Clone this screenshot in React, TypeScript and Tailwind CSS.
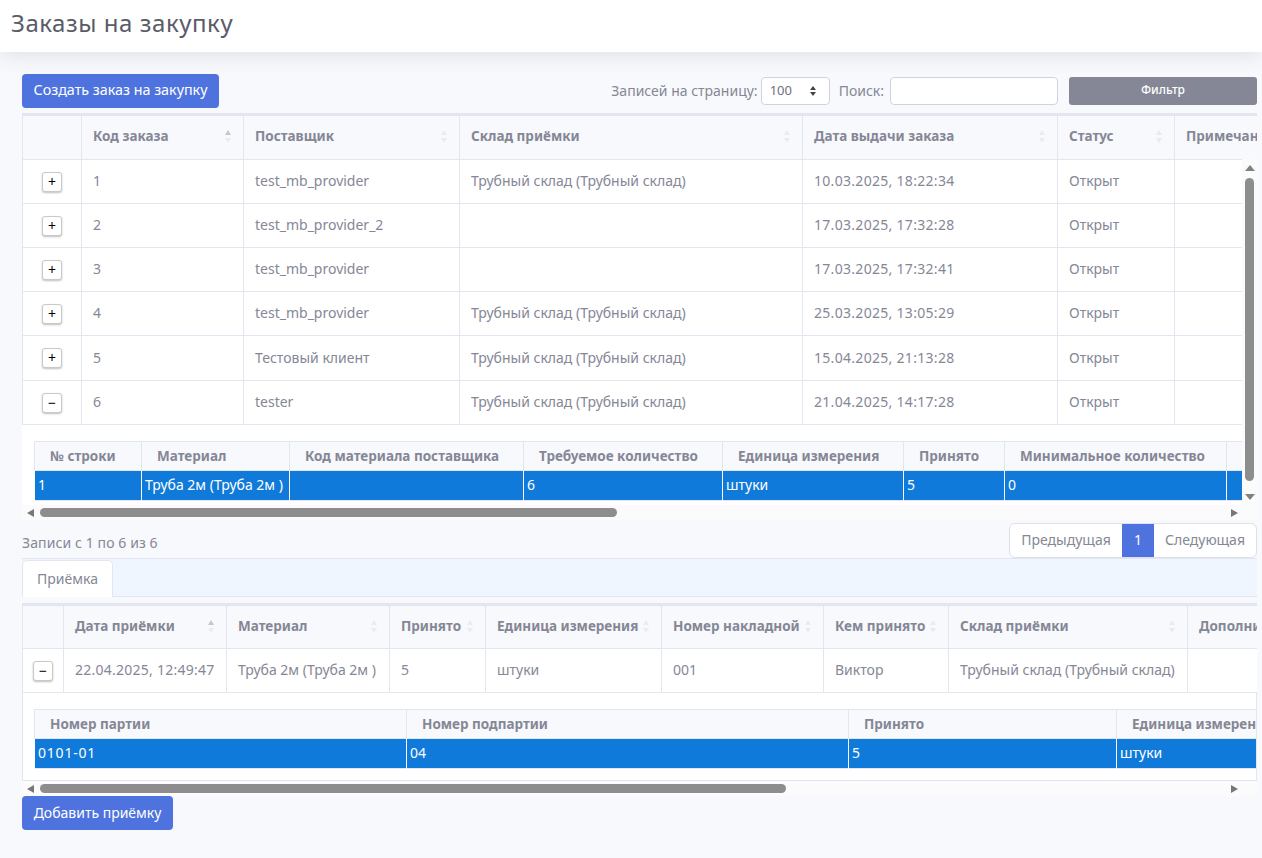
const font = "font-['Noto_Sans',sans-serif]";

function SortArrows({ active }: { active?: boolean }) {
  return (
    <span className="flex flex-col gap-[3px] shrink-0 w-[8px] items-center">
      <span className={`w-0 h-0 border-x-[3px] border-x-transparent border-b-[5px] ${active ? "border-b-[#c4c6d0]" : "border-b-[#e9ebf2]"}`} />
      <span className="w-0 h-0 border-x-[3px] border-x-transparent border-t-[5px] border-t-[#e9ebf2]" />
    </span>
  );
}

function Th({ label, sort, active }: { label?: string; sort?: boolean; active?: boolean }) {
  return (
    <th className="border border-[#e3e6f0] px-[11px] pb-[2px] text-[13.5px] font-bold text-left bg-[#f8f9fc] overflow-hidden whitespace-nowrap">
      <div className="flex items-center justify-between">
        <span>{label}</span>
        {sort && <SortArrows active={active} />}
      </div>
    </th>
  );
}

function Toggle({ open }: { open?: boolean }) {
  return (
    <button className="w-[20px] h-[20px] mx-auto flex items-center justify-center bg-white border border-[#c9c9c9] rounded-[3px] shadow-[0_1px_2px_rgba(0,0,0,0.25)] text-black text-[14px] leading-none">
      {open ? "−" : "+"}
    </button>
  );
}

function HScroll({ thumb }: { thumb: string }) {
  return (
    <div className="h-[15px] bg-[#fbfbfb] flex items-center pl-[5px] gap-[6px]">
      <span className="w-0 h-0 border-y-[4px] border-y-transparent border-r-[7px] border-r-[#777]" />
      <div className="flex-1">
        <div className={`h-[9px] rounded-full bg-[#8d8d8d] ${thumb}`} />
      </div>
      <span className="w-0 h-0 border-y-[4px] border-y-transparent border-l-[7px] border-l-[#777] mr-[19px]" />
    </div>
  );
}

function SubTable({ cols, heads, cells, width }: { cols: string[]; heads: string[]; cells: string[]; width: string }) {
  return (
    <table className={`table-fixed border border-[#e3e6f0] ${width}`}>
      <colgroup>
        {cols.map((c, i) => (
          <col key={i} className={c} />
        ))}
      </colgroup>
      <thead>
        <tr className="h-[29px]">
          {heads.map((h, i) => (
            <th key={i} className="border border-[#e3e6f0] pl-[15px] text-left text-[13.5px] font-bold bg-[#f8f9fc] whitespace-nowrap overflow-hidden">
              {h}
            </th>
          ))}
        </tr>
      </thead>
      <tbody>
        <tr className="h-[30px] bg-[#0f7ad9] text-white">
          {cells.map((c, i) => (
            <td key={i} className="border-x border-white px-[3px] pb-[2px] whitespace-nowrap overflow-hidden">
              {c === "0101-01" ? <span className="tracking-[0.8px]">{c}</span> : c}
            </td>
          ))}
        </tr>
      </tbody>
    </table>
  );
}

const orders = [
  ["1", "test_mb_provider", "Трубный склад (Трубный склад)", "10.03.2025, 18:22:34"],
  ["2", "test_mb_provider_2", "", "17.03.2025, 17:32:28"],
  ["3", "test_mb_provider", "", "17.03.2025, 17:32:41"],
  ["4", "test_mb_provider", "Трубный склад (Трубный склад)", "25.03.2025, 13:05:29"],
  ["5", "Тестовый клиент", "Трубный склад (Трубный склад)", "15.04.2025, 21:13:28"],
  ["6", "tester", "Трубный склад (Трубный склад)", "21.04.2025, 14:17:28"],
];

export default function App() {
  return (
    <div className={`min-h-screen bg-[#f8f9fc] text-[#858796] text-[14px] ${font}`}>
      <header className="h-[52px] bg-white shadow-[0_4px_20px_rgba(58,59,69,0.12)] flex items-center pl-[11px] pb-[6px]">
        <h1 className="text-[24px] text-[#5a5c69] font-normal tracking-[0.55px]">Заказы на закупку</h1>
      </header>

      <main className="pl-[22px] pr-[5px] pt-[22px]">
        <div className="flex items-center h-[34px]">
          <button className="h-[34px] w-[197px] pb-[2px] bg-[#4e73df] text-white rounded-[4px] text-[14.3px]">Создать заказ на закупку</button>
          <span className="ml-auto pb-[2px]">Записей на страницу:</span>
          <div className="ml-[3px] w-[69px] h-[28px] bg-white border border-[#d1d3e2] rounded-[4px] flex items-center justify-between pl-[8px] pr-[13px] text-[#6e707e] text-[13px]">
            100
            <span className="flex flex-col gap-[2px]">
              <span className="w-0 h-0 border-x-[3px] border-x-transparent border-b-[4px] border-b-[#444]" />
              <span className="w-0 h-0 border-x-[3px] border-x-transparent border-t-[4px] border-t-[#444]" />
            </span>
          </div>
          <span className="ml-[9px] pb-[2px]">Поиск:</span>
          <input className="ml-[6px] w-[168px] h-[28px] bg-white border border-[#d1d3e2] rounded-[4px]" />
          <button className="ml-[11px] w-[188px] h-[28px] pb-[2px] bg-[#858796] text-white rounded-[3px] text-[12px] font-medium">Фильтр</button>
        </div>

        <div className="relative mt-[5px] border-t-2 border-[#e3e6f0] overflow-hidden">
          <table className="table-fixed w-[1400px] bg-white border-collapse">
            <colgroup>
              <col className="w-[59px]" />
              <col className="w-[162px]" />
              <col className="w-[216px]" />
              <col className="w-[343px]" />
              <col className="w-[255px]" />
              <col className="w-[117px]" />
              <col className="w-[248px]" />
            </colgroup>
            <thead>
              <tr className="h-[44px]">
                <Th />
                <Th label="Код заказа" sort active />
                <Th label="Поставщик" sort />
                <Th label="Склад приёмки" sort />
                <Th label="Дата выдачи заказа" sort />
                <Th label="Статус" sort />
                <Th label="Примечание" />
              </tr>
            </thead>
            <tbody>
              {orders.map((o) => (
                <tr key={o[0]} className={o[0] === "5" ? "h-[45px]" : "h-[44px]"}>
                  <td className="border border-[#e3e6f0]">
                    <Toggle open={o[0] === "6"} />
                  </td>
                  {o.map((c, i) => (
                    <td key={i} className={`border border-[#e3e6f0] px-[11px] pb-[2px] whitespace-nowrap ${i === 3 ? "tracking-[0.3px]" : ""}`}>
                      {c}
                    </td>
                  ))}
                  <td className="border border-[#e3e6f0] px-[11px] pb-[2px]">Открыт</td>
                  <td className="border border-[#e3e6f0]" />
                </tr>
              ))}
            </tbody>
          </table>
          <div className="bg-white pt-[16px] pl-[12px] pr-[15px] pb-[4px] overflow-hidden">
            <SubTable
              width="w-[1300px]"
              cols={["w-[107px]", "w-[148px]", "w-[234px]", "w-[199px]", "w-[181px]", "w-[101px]", "w-[222px]", "w-[108px]"]}
              heads={["№ строки", "Материал", "Код материала поставщика", "Требуемое количество", "Единица измерения", "Принято", "Минимальное количество", ""]}
              cells={["1", "Труба 2м (Труба 2м )", "", "6", "штуки", "5", "0", ""]}
            />
          </div>
          <HScroll thumb="w-[577px]" />
          <div className="absolute right-0 top-[44px] bottom-[15px] w-[15px] bg-[#fbfbfb] flex flex-col items-center pt-[6px] pb-[5px]">
            <span className="w-0 h-0 border-x-[5px] border-x-transparent border-b-[6px] border-b-[#808080]" />
            <div className="w-[9px] h-[303px] mt-[7px] rounded-full bg-[#8d8d8d]" />
            <span className="w-0 h-0 mt-auto border-x-[5px] border-x-transparent border-t-[6px] border-t-[#808080]" />
          </div>
        </div>

        <div className="flex items-center justify-between h-[38px] pt-[2px]">
          <span className="pt-[4px] tracking-[0.1px]">Записи с 1 по 6 из 6</span>
          <div className="flex h-[35px] bg-white border border-[#dddfeb] rounded-[6px] overflow-hidden items-stretch">
            <span className="w-[112px] pb-[2px] flex items-center justify-center">Предыдущая</span>
            <span className="w-[32px] pb-[2px] flex items-center justify-center bg-[#4e73df] text-white">1</span>
            <span className="w-[102px] pb-[2px] flex items-center justify-center">Следующая</span>
          </div>
        </div>

        <div className="h-[39px] bg-[#f0f6ff] border-y border-[#e3e6f0] flex items-end">
          <div className="h-[37px] w-[91px] pb-[2px] bg-white border-x border-t border-[#e3e6f0] rounded-t-[5px] -mb-px flex items-center justify-center">
            Приёмка
          </div>
        </div>

        <div className="relative mt-[6px] border-t-2 border-[#e3e6f0] overflow-hidden">
          <table className="table-fixed w-[1400px] bg-white border-collapse">
            <colgroup>
              <col className="w-[41px]" />
              <col className="w-[163px]" />
              <col className="w-[163px]" />
              <col className="w-[96px]" />
              <col className="w-[176px]" />
              <col className="w-[162px]" />
              <col className="w-[125px]" />
              <col className="w-[239px]" />
              <col className="w-[235px]" />
            </colgroup>
            <thead>
              <tr className="h-[43px]">
                <Th />
                <Th label="Дата приёмки" sort active />
                <Th label="Материал" sort />
                <Th label="Принято" sort />
                <Th label="Единица измерения" sort />
                <Th label="Номер накладной" sort />
                <Th label="Кем принято" sort />
                <Th label="Склад приёмки" sort />
                <Th label="Дополнительно" />
              </tr>
            </thead>
            <tbody>
              <tr className="h-[44px]">
                <td className="border border-[#e3e6f0]">
                  <Toggle open />
                </td>
                {["22.04.2025, 12:49:47", "Труба 2м (Труба 2м )", "5", "штуки", "001", "Виктор", "Трубный склад (Трубный склад)", ""].map((c, i) => (
                  <td key={i} className={`border border-[#e3e6f0] px-[11px] pb-[2px] whitespace-nowrap overflow-hidden ${i === 0 ? "tracking-[0.25px]" : ""}`}>
                    {c}
                  </td>
                ))}
              </tr>
            </tbody>
          </table>
          <div className="bg-white pt-[16px] pl-[11px] pb-[11px] border-x border-b border-[#e3e6f0] overflow-hidden">
            <SubTable
              width="w-[1400px]"
              cols={["w-[372px]", "w-[442px]", "w-[268px]", "w-[318px]"]}
              heads={["Номер партии", "Номер подпартии", "Принято", "Единица измерения"]}
              cells={["0101-01", "04", "5", "штуки"]}
            />
          </div>
          <HScroll thumb="w-[746px]" />
        </div>

        <button className="h-[34px] w-[151px] pb-[2px] bg-[#4e73df] text-white rounded-[4px] text-[14px]">Добавить приёмку</button>
      </main>
    </div>
  );
}
